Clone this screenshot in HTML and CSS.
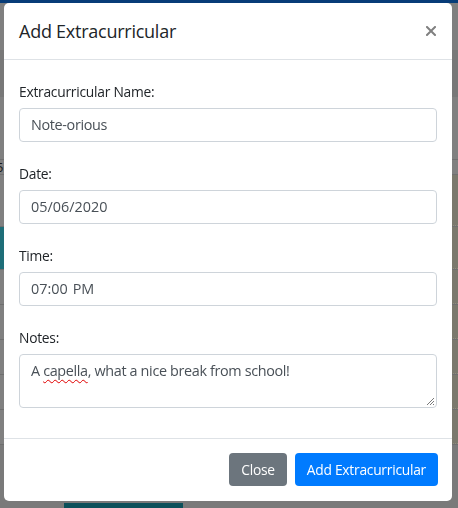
FILE: index.html
```html
<!DOCTYPE html>
<html lang="en">
<head>
<meta charset="utf-8">
<title>Add Extracurricular</title>
<link rel="stylesheet" href="styles.css">
</head>
<body>
<div class="page">
  <div class="topbar"></div>
  <div class="navband"></div>
  <div class="lead"></div>
  <div class="thead"></div>
  <div class="subhead"><span class="digit">5</span></div>
  <div class="rows">
    <div class="row tall"><div class="cell"></div><div class="cell side"></div></div>
    <div class="row mid"><div class="cell teal"></div><div class="cell side"></div></div>
    <div class="row"><div class="cell"></div><div class="cell side"></div></div>
    <div class="row"><div class="cell"></div><div class="cell side"></div></div>
    <div class="row"><div class="cell"></div><div class="cell side"></div></div>
    <div class="row"><div class="cell"></div><div class="cell side"></div></div>
    <div class="row"><div class="cell"></div><div class="cell side"></div></div>
  </div>
  <div class="tail"><div class="tealbtn"></div></div>
</div>

<div class="modal">
  <div class="dialog">
    <div class="header">
      <h5 class="title">Add Extracurricular</h5>
      <button class="close" type="button" aria-label="Close">
        <svg width="10" height="10" viewBox="0 0 10 10"><path d="M1 1 L9 9 M9 1 L1 9" stroke="#808080" stroke-width="2" stroke-linecap="square" fill="none"/></svg>
      </button>
    </div>
    <div class="body">
      <div class="group">
        <label class="label">Extracurricular Name:</label>
        <div class="control">Note-orious</div>
      </div>
      <div class="group">
        <label class="label">Date:</label>
        <div class="control num">05/06/2020</div>
      </div>
      <div class="group">
        <label class="label">Time:</label>
        <div class="control num"><span>07:00</span><span class="ampm">PM</span></div>
      </div>
      <div class="group last">
        <label class="label">Notes:</label>
        <div class="control area">A <span class="spell">capella</span>, what a nice break from school!
          <svg class="grip" width="9" height="9" viewBox="0 0 9 9"><path d="M8 1 L1 8 M8 4 L4 8 M8 7 L7 8" stroke="#7a7a7a" stroke-width="1" fill="none"/></svg>
        </div>
      </div>
    </div>
    <div class="footer">
      <button class="btn secondary" type="button">Close</button>
      <button class="btn primary" type="button">Add Extracurricular</button>
    </div>
  </div>
</div>
</body>
</html>
```

FILE: styles.css
```css
* { box-sizing: border-box; }
html, body { margin: 0; padding: 0; }
body {
  width: 458px;
  height: 508px;
  overflow: hidden;
  background: #7f7f7f;
  font-family: "Open Sans", "Noto Sans", sans-serif;
}

/* dimmed page underneath */
.page { display: flex; flex-direction: column; }
.topbar { height: 3px; background: #073c78; }
.navband { height: 47px; background: #7f7f7f; }
.lead { height: 47px; background: #787878; }
.thead {
  height: 63px;
  background: #808080;
  border-bottom: 1px solid #707070;
}
.subhead {
  height: 15px;
  background: #808080;
  border-bottom: 1px solid #707070;
  display: flex;
  align-items: center;
}
.digit { font-size: 13px; color: #1a1a1a; line-height: 13px; margin-left: -4px; }
.rows { display: flex; flex-direction: column; }
.row {
  height: 35px;
  display: grid;
  grid-template-columns: 1fr 40px;
  border-bottom: 1px solid #6f6f6f;
}
.row.tall { height: 52px; }
.row.mid { height: 43px; }
.cell { background: #808080; }
.cell.teal { background: #1e6e78; }
.cell.side { background: #7b796d; border-bottom: 1px dotted #8f8d80; }
.tail { height: 70px; background: #7a7a7a; display: flex; align-items: flex-end; padding-left: 64px; }
.tealbtn { width: 119px; height: 12px; background: #0c505a; }

/* modal */
.modal {
  position: fixed;
  inset: 0;
  padding: 3px 6px 0 4px;
}
.dialog {
  width: 448px;
  height: 498px;
  background: #fff;
  border-radius: 5px;
  display: flex;
  flex-direction: column;
  color: #212529;
}
.header {
  height: 57px;
  padding: 0 15px 0 15px;
  display: flex;
  align-items: center;
  justify-content: space-between;
  border-bottom: 1px solid #dee2e6;
}
.title {
  margin: 0;
  font-size: 18px;
  font-weight: 500;
  line-height: 27px;
  letter-spacing: -0.25px;
  color: #212529;
}
.close {
  border: 0;
  background: none;
  padding: 0;
  margin-right: 1px;
  width: 10px;
  height: 10px;
  display: flex;
}

.body {
  flex: 1;
  padding: 21px 15px 0 15px;
  display: flex;
  flex-direction: column;
}
.group { display: flex; flex-direction: column; margin-bottom: 21px; }
.group.last { margin-bottom: 0; }
.label {
  font-size: 13.8px;
  letter-spacing: -0.25px;
  line-height: 21px;
  margin-bottom: 6px;
  color: #212529;
}
.control {
  height: 34px;
  border: 1px solid #ced4da;
  border-radius: 4px;
  padding: 0 11px;
  font-size: 14.4px;
  letter-spacing: -0.35px;
  line-height: 32px;
  color: #495057;
  display: flex;
  align-items: center;
}
.control.num { letter-spacing: 0; }
.ampm { margin-left: 5px; }
.control.area {
  height: 54px;
  display: block;
  position: relative;
  line-height: 21px;
  padding-top: 5px;
}
.spell {
  text-decoration: underline wavy #e00000;
  text-decoration-thickness: 1px;
  text-underline-offset: 3px;
}
.grip { position: absolute; right: 1px; bottom: 1px; }

.footer {
  border-top: 1px solid #dee2e6;
  padding: 14px 14px 15px;
  display: flex;
  justify-content: flex-end;
  gap: 8px;
}
.btn {
  height: 33px;
  border: 0;
  border-radius: 4px;
  color: #fff;
  font-family: inherit;
  font-size: 13.8px;
  letter-spacing: -0.25px;
  padding: 0 12px;
  line-height: 33px;
}
.secondary { background: #6c757d; }
.primary { background: #007bff; }
```
